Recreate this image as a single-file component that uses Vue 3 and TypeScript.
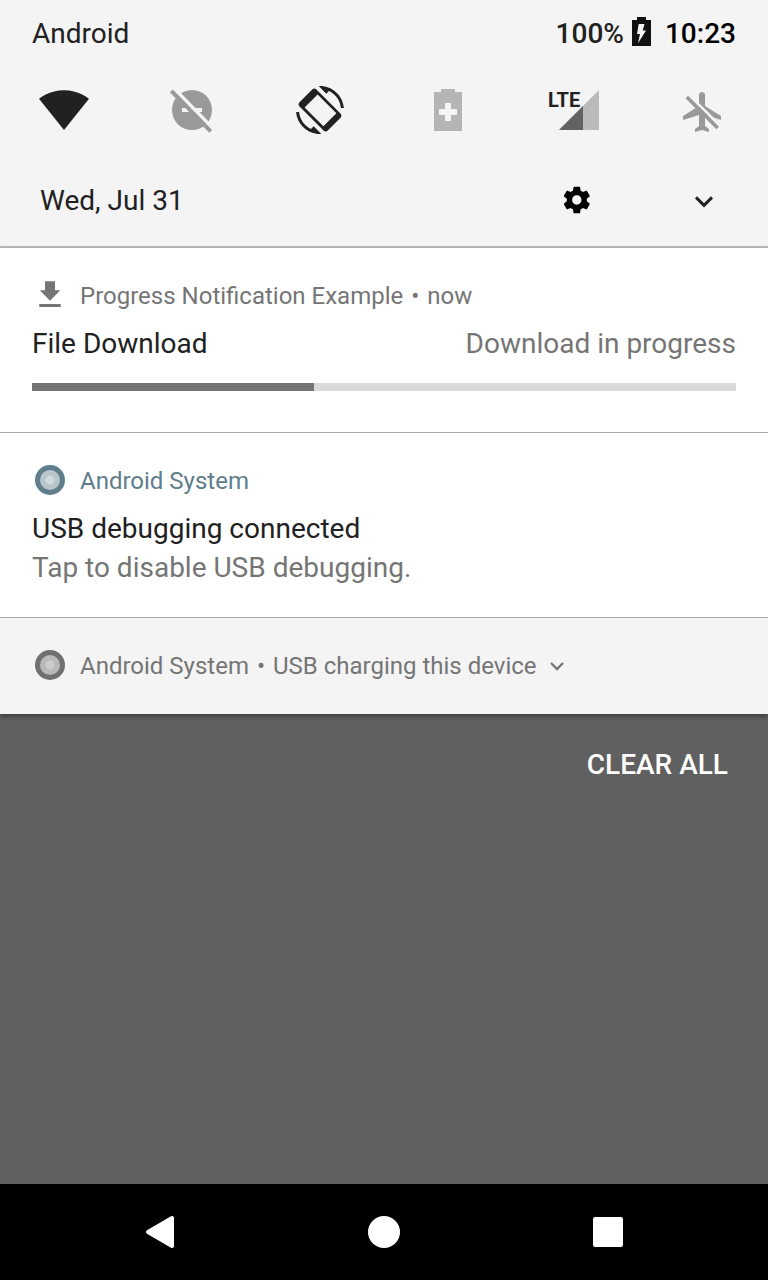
<script setup lang="ts">
import { ref } from 'vue'

type TileId = 'wifi' | 'dnd' | 'rotate' | 'battery' | 'cell' | 'airplane'

interface Tile {
  id: TileId
  label: string
  on: boolean
}

const tiles = ref<Tile[]>([
  { id: 'wifi', label: 'Wi-Fi', on: true },
  { id: 'dnd', label: 'Do not disturb', on: false },
  { id: 'rotate', label: 'Auto-rotate', on: true },
  { id: 'battery', label: 'Battery saver', on: false },
  { id: 'cell', label: 'Mobile data', on: true },
  { id: 'airplane', label: 'Airplane mode', on: false },
])

const progress = ref(40)
</script>

<template>
  <div class="screen">
    <header class="panel">
      <div class="status">
        <span class="carrier">Android</span>
        <span class="level">100%</span>
        <svg class="charge" viewBox="0 0 19 32" aria-hidden="true">
          <path d="M5 0h9v3h5v26H0V3h5z" fill="#111" />
          <path d="M6.7 7h5.8l-1.8 6.5H14L6 26.3 8 17H5z" fill="#f4f4f4" />
        </svg>
        <time class="clock">10:23</time>
      </div>

      <div class="tiles">
        <button v-for="tile in tiles" :key="tile.id" type="button" class="tile" :aria-label="tile.label" :aria-pressed="tile.on">
          <svg v-if="tile.id === 'wifi'" class="tile-icon" viewBox="0 0 64 64">
            <path transform="translate(6 8) scale(2)" fill="#212121" d="M13 22 25.5 6.4C25.1 6.1 20.3 2.1 13 2.1S.9 6.1.5 6.4z" />
          </svg>
          <svg v-else-if="tile.id === 'dnd'" class="tile-icon" viewBox="0 0 64 64">
            <circle cx="32" cy="32" r="20" fill="#999" />
            <path d="M22 30h20v4H22z" fill="#f4f4f4" />
            <path d="M13.9 10.2 53.3 50.7" stroke="#f4f4f4" stroke-width="3.4" />
            <path d="M11.3 12.8 50.7 53.3" stroke="#999" stroke-width="4" />
          </svg>
          <svg v-else-if="tile.id === 'rotate'" class="tile-icon" viewBox="0 0 64 64">
            <path
              transform="translate(8 8) scale(2)"
              fill="#212121"
              fill-rule="evenodd"
              d="M16.48 2.52c3.27 1.55 5.61 4.72 5.97 8.48h1.5C23.44 4.84 18.29 0 12 0l-.66.03 3.81 3.81 1.33-1.32zM10.23 1.75c-.59-.59-1.54-.59-2.12 0L1.75 8.11c-.59.59-.59 1.54 0 2.12l12.02 12.02c.59.59 1.54.59 2.12 0l6.36-6.36c.59-.59.59-1.54 0-2.12L10.23 1.75zM10.8 4.2 20.200 13.600 13.700 20.100 4.300 10.700zM7.520 21.480C4.250 19.940 1.910 16.760 1.550 13H.05C.56 19.160 5.710 24 12 24l.66-.03-3.810-3.810-1.330 1.320z"
            />
          </svg>
          <svg v-else-if="tile.id === 'battery'" class="tile-icon" viewBox="0 0 64 64">
            <path fill="#b5b5b5" fill-rule="evenodd" d="M25 11h14v3h7v39H18V14h7zM29 25v6h-6v6h6v6h6v-6h6v-6h-6v-6z" />
          </svg>
          <svg v-else-if="tile.id === 'cell'" class="tile-icon" viewBox="0 0 64 64">
            <path d="M55 12v40H15z" fill="#bababa" />
            <path d="M39 28v24H15z" fill="#626262" />
            <text x="4" y="29" class="lte">LTE</text>
          </svg>
          <svg v-else class="tile-icon" viewBox="0 0 64 64">
            <path
              transform="translate(7 10) scale(2)"
              fill="#999"
              d="M21 16v-2l-8-5V3.5c0-.83-.67-1.5-1.5-1.5S10 2.67 10 3.5V9l-8 5v2l8-2.5V19l-2 1.5V22l3.5-1 3.5 1v-1.5L13 19v-5.5l8 2.5z"
            />
            <path d="M17 16.8 49 48.6" stroke="#f4f4f4" stroke-width="2.6" />
            <path d="M14.8 19 45.7 50" stroke="#999" stroke-width="3.6" />
          </svg>
        </button>
      </div>

      <div class="footer">
        <span class="date">Wed, Jul 31</span>
        <button type="button" class="footer-button" aria-label="Settings">
          <svg class="gear" viewBox="0 0 24 24">
            <path
              transform="translate(.6 0)"
              d="M19.43 12.98c.04-.32.07-.64.07-.98s-.03-.66-.07-.98l2.11-1.65c.19-.15.24-.42.12-.64l-2-3.46c-.12-.22-.39-.3-.61-.22l-2.49 1c-.52-.4-1.08-.73-1.69-.98l-.38-2.65C14.46 2.18 14.25 2 14 2h-4c-.25 0-.46.18-.49.42l-.38 2.65c-.61.25-1.17.59-1.69.98l-2.49-1c-.23-.09-.49 0-.61.22l-2 3.46c-.13.22-.07.49.12.64l2.11 1.65c-.04.32-.07.65-.07.98s.03.66.07.98l-2.11 1.65c-.19.15-.24.42-.12.64l2 3.46c.12.22.39.3.61.22l2.49-1c.52.4 1.08.73 1.69.98l.38 2.65c.03.24.24.42.49.42h4c.25 0 .46-.18.49-.42l.38-2.65c.61-.25 1.17-.59 1.69-.98l2.49 1c.23.09.49 0 .61-.22l2-3.46c.12-.22.07-.49-.12-.64l-2.11-1.65zM12 15.5c-1.93 0-3.5-1.57-3.5-3.5s1.57-3.5 3.5-3.5 3.5 1.57 3.5 3.5-1.57 3.5-3.5 3.5z"
            />
          </svg>
        </button>
        <button type="button" class="footer-button" aria-label="Expand quick settings">
          <svg class="expand" viewBox="0 0 32 32">
            <path d="m8 13.4 8 8 8-8" fill="none" stroke="#212121" stroke-width="3" />
          </svg>
        </button>
      </div>
    </header>

    <main class="list">
      <article class="card">
        <div class="source">
          <svg class="source-icon" viewBox="0 0 36 36" aria-hidden="true">
            <path fill="#757575" d="M13 4.300h10v9h5.300L18 23.700 7.800 13.300H13zM7.300 27h21.400v3H7.300z" />
          </svg>
          <span>Progress Notification Example</span>
          <span class="dot">•</span>
          <span>now</span>
        </div>
        <div class="line title-line">
          <h2 class="title">File Download</h2>
          <span class="detail">Download in progress</span>
        </div>
        <div class="track" role="progressbar" aria-label="File Download" :aria-valuenow="progress" aria-valuemin="0" aria-valuemax="100">
          <div class="fill" :style="{ width: progress + '%' }"></div>
        </div>
      </article>

      <article class="card">
        <div class="source system">
          <svg class="source-icon" viewBox="0 0 36 36" aria-hidden="true">
            <circle cx="18" cy="18" r="15" fill="#607d8b" />
            <circle cx="18" cy="18" r="10" fill="#b8c5cb" />
            <circle cx="18" cy="18" r="4.5" fill="#cfd8dc" />
          </svg>
          <span>Android System</span>
        </div>
        <div class="line title-line">
          <h2 class="title">USB debugging connected</h2>
        </div>
        <p class="line detail">Tap to disable USB debugging.</p>
      </article>

      <article class="card quiet">
        <div class="source">
          <svg class="source-icon" viewBox="0 0 36 36" aria-hidden="true">
            <circle cx="18" cy="18" r="15" fill="#707070" />
            <circle cx="18" cy="18" r="10" fill="#b9b9b9" />
            <circle cx="18" cy="18" r="4.5" fill="#cdcdcd" />
          </svg>
          <span>Android System</span>
          <span class="dot">•</span>
          <span>USB charging this device</span>
          <button type="button" class="more" aria-label="Expand notification">
            <svg class="more-icon" viewBox="0 0 36 36">
              <path d="m14 16 6 6 6-6" fill="none" stroke="#757575" stroke-width="2.4" />
            </svg>
          </button>
        </div>
      </article>
    </main>

    <div class="actions">
      <button type="button" class="clear">CLEAR ALL</button>
    </div>

    <nav class="nav">
      <button type="button" class="nav-button" aria-label="Back">
        <svg class="nav-icon" viewBox="0 0 36 36">
          <path d="M6 18 30 4v28z" fill="#fff" stroke="#fff" stroke-width="4" stroke-linejoin="round" />
        </svg>
      </button>
      <button type="button" class="nav-button" aria-label="Home">
        <svg class="nav-icon" viewBox="0 0 36 36"><circle cx="18" cy="18" r="16" fill="#fff" /></svg>
      </button>
      <button type="button" class="nav-button" aria-label="Recent apps">
        <svg class="nav-icon" viewBox="0 0 36 36"><rect x="3" y="3" width="30" height="30" rx="2" fill="#fff" /></svg>
      </button>
    </nav>
  </div>
</template>

<style>
body {
  margin: 0;
  background: #606060;
}
</style>

<style scoped>
.screen {
  display: flex;
  flex-direction: column;
  min-height: 100vh;
  background: #606060;
  color: #212121;
  font-family: Roboto, sans-serif;
  font-size: 28px;
}

button {
  display: flex;
  align-items: center;
  justify-content: center;
  margin: 0;
  padding: 0;
  border: 0;
  background: none;
  color: inherit;
  font: inherit;
  cursor: pointer;
}

svg {
  display: block;
  flex: none;
}

.panel {
  background: #f4f4f4;
  border-bottom: 2px solid #bdbdbd;
}

.status {
  display: flex;
  align-items: center;
  height: 66px;
  padding: 0 32px;
}

.carrier {
  flex: 1;
}

.level {
  font-weight: 500;
}

.charge {
  width: 19px;
  height: 32px;
  margin: 0 14px 0 8px;
}

.clock {
  color: #000;
  font-weight: 500;
}

.tiles {
  display: grid;
  grid-template-columns: repeat(6, 1fr);
  height: 88px;
}

.tile-icon {
  width: 64px;
  height: 64px;
}

.lte {
  fill: #212121;
  font-family: "Liberation Sans Narrow", Roboto, sans-serif;
  font-size: 20px;
  font-weight: 700;
}

.footer {
  display: flex;
  align-items: stretch;
  height: 92px;
  padding-left: 40px;
}

.date {
  flex: 1;
  line-height: 94px;
}

.footer-button {
  width: 128px;
}

.gear {
  width: 32px;
  height: 32px;
}

.expand {
  width: 32px;
  height: 32px;
}

.list {
  position: relative;
  box-shadow: 0 2px 5px rgba(0, 0, 0, 0.4);
}

.card {
  padding: 29px 32px 30px;
  background: #fff;
}

.card + .card {
  border-top: 1px solid #a8a8a8;
}

.card.quiet {
  padding-bottom: 31px;
  background: #f4f4f4;
}

.source {
  display: flex;
  align-items: flex-start;
  height: 36px;
  color: #757575;
  font-size: 24px;
  line-height: 38px;
}

.source.system {
  color: #607d8b;
}

.source-icon {
  width: 36px;
  height: 36px;
  margin-right: 12px;
}

.dot {
  width: 24px;
  text-align: center;
}

.line {
  margin: 0;
  line-height: 39px;
}

.title-line {
  display: flex;
  justify-content: space-between;
  margin-top: 11px;
}

.title {
  margin: 0;
  font-size: 28px;
  font-weight: 400;
}

.detail {
  color: #757575;
}

.track {
  height: 8px;
  margin: 20px 0 11px;
  background: #dadada;
}

.fill {
  height: 100%;
  background: #757575;
}

.more-icon {
  width: 36px;
  height: 36px;
}

.actions {
  display: flex;
  flex: 1;
  align-items: flex-start;
  justify-content: flex-end;
  padding: 16px 24px;
}

.clear {
  height: 68px;
  padding: 0 16px;
  color: #fff;
  font-weight: 500;
}

.nav {
  display: flex;
  height: 96px;
  padding: 0 48px;
  background: #000;
}

.nav-button {
  flex: 1;
}

.nav-icon {
  width: 36px;
  height: 36px;
}
</style>
